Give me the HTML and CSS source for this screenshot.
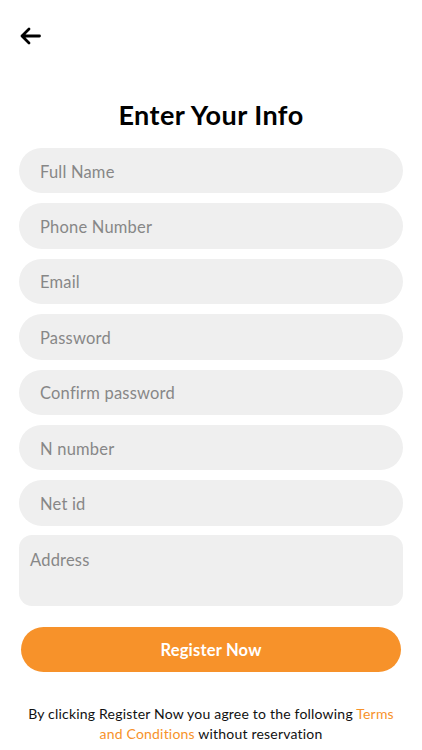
FILE: index.html
```html
<!DOCTYPE html>
<html>
<head>
<meta charset="utf-8">
<link rel="stylesheet" href="styles.css">
</head>
<body>
<div class="page">
  <div class="topbar">
    <svg class="back" width="22" height="18" viewBox="0 0 22 18"><path d="M20.5 9H3M10 2L3 9l7 7" fill="none" stroke="#000" stroke-width="2.8" stroke-linecap="round" stroke-linejoin="round"/></svg>
  </div>
  <h1 class="title">Enter Your Info</h1>
  <form class="form">
    <div class="field">Full Name</div>
    <div class="field">Phone Number</div>
    <div class="field">Email</div>
    <div class="field">Password</div>
    <div class="field">Confirm password</div>
    <div class="field">N number</div>
    <div class="field">Net id</div>
    <div class="field area">Address</div>
  </form>
  <div class="btn">Register Now</div>
  <div class="terms">
    <div class="line">By clicking Register Now you agree to the following <span class="link">Terms</span></div>
    <div class="line"><span class="link">and Conditions</span> without reservation</div>
  </div>
</div>
</body>
</html>
```
FILE: styles.css
```css
* { box-sizing: border-box; }
html, body { margin: 0; padding: 0; background: #fff; }
body { font-family: Lato, "Noto Sans", sans-serif; }
.page { width: 422px; height: 750px; padding: 0 19px 0 19px; display: flex; flex-direction: column; overflow: hidden; }
.topbar { height: 70px; display: flex; align-items: flex-start; padding-top: 27px; }
.back { display: block; }
.title { margin: 29px 0 0 0; height: 49px; font-size: 27px; font-weight: 700; letter-spacing: 0.45px; text-align: center; color: #000; line-height: 32px; }
.form { display: flex; flex-direction: column; gap: 10px; }
.field { height: 45.4px; background: #efefef; border-radius: 23px; padding-left: 21px; padding-top: 2px; display: flex; align-items: center; font-size: 16.5px; letter-spacing: 0.2px; color: #878787; }
.field.area { height: 71px; margin-top: -1px; border-radius: 13px; padding-left: 11px; align-items: flex-start; padding-top: 15px; }
.btn { margin: 21px 2px 0 2px; height: 45px; padding-top: 2px; background: #f7922a; border-radius: 23px; color: #fff; font-size: 16.5px; font-weight: 700; letter-spacing: 0.2px; display: flex; align-items: center; justify-content: center; }
.terms { margin: 32px 0 0 0; font-size: 14px; letter-spacing: 0.2px; line-height: 20px; text-align: center; color: #111; display: flex; flex-direction: column; align-items: center; }
.line { white-space: nowrap; }
.link { color: #f7922a; }
```
